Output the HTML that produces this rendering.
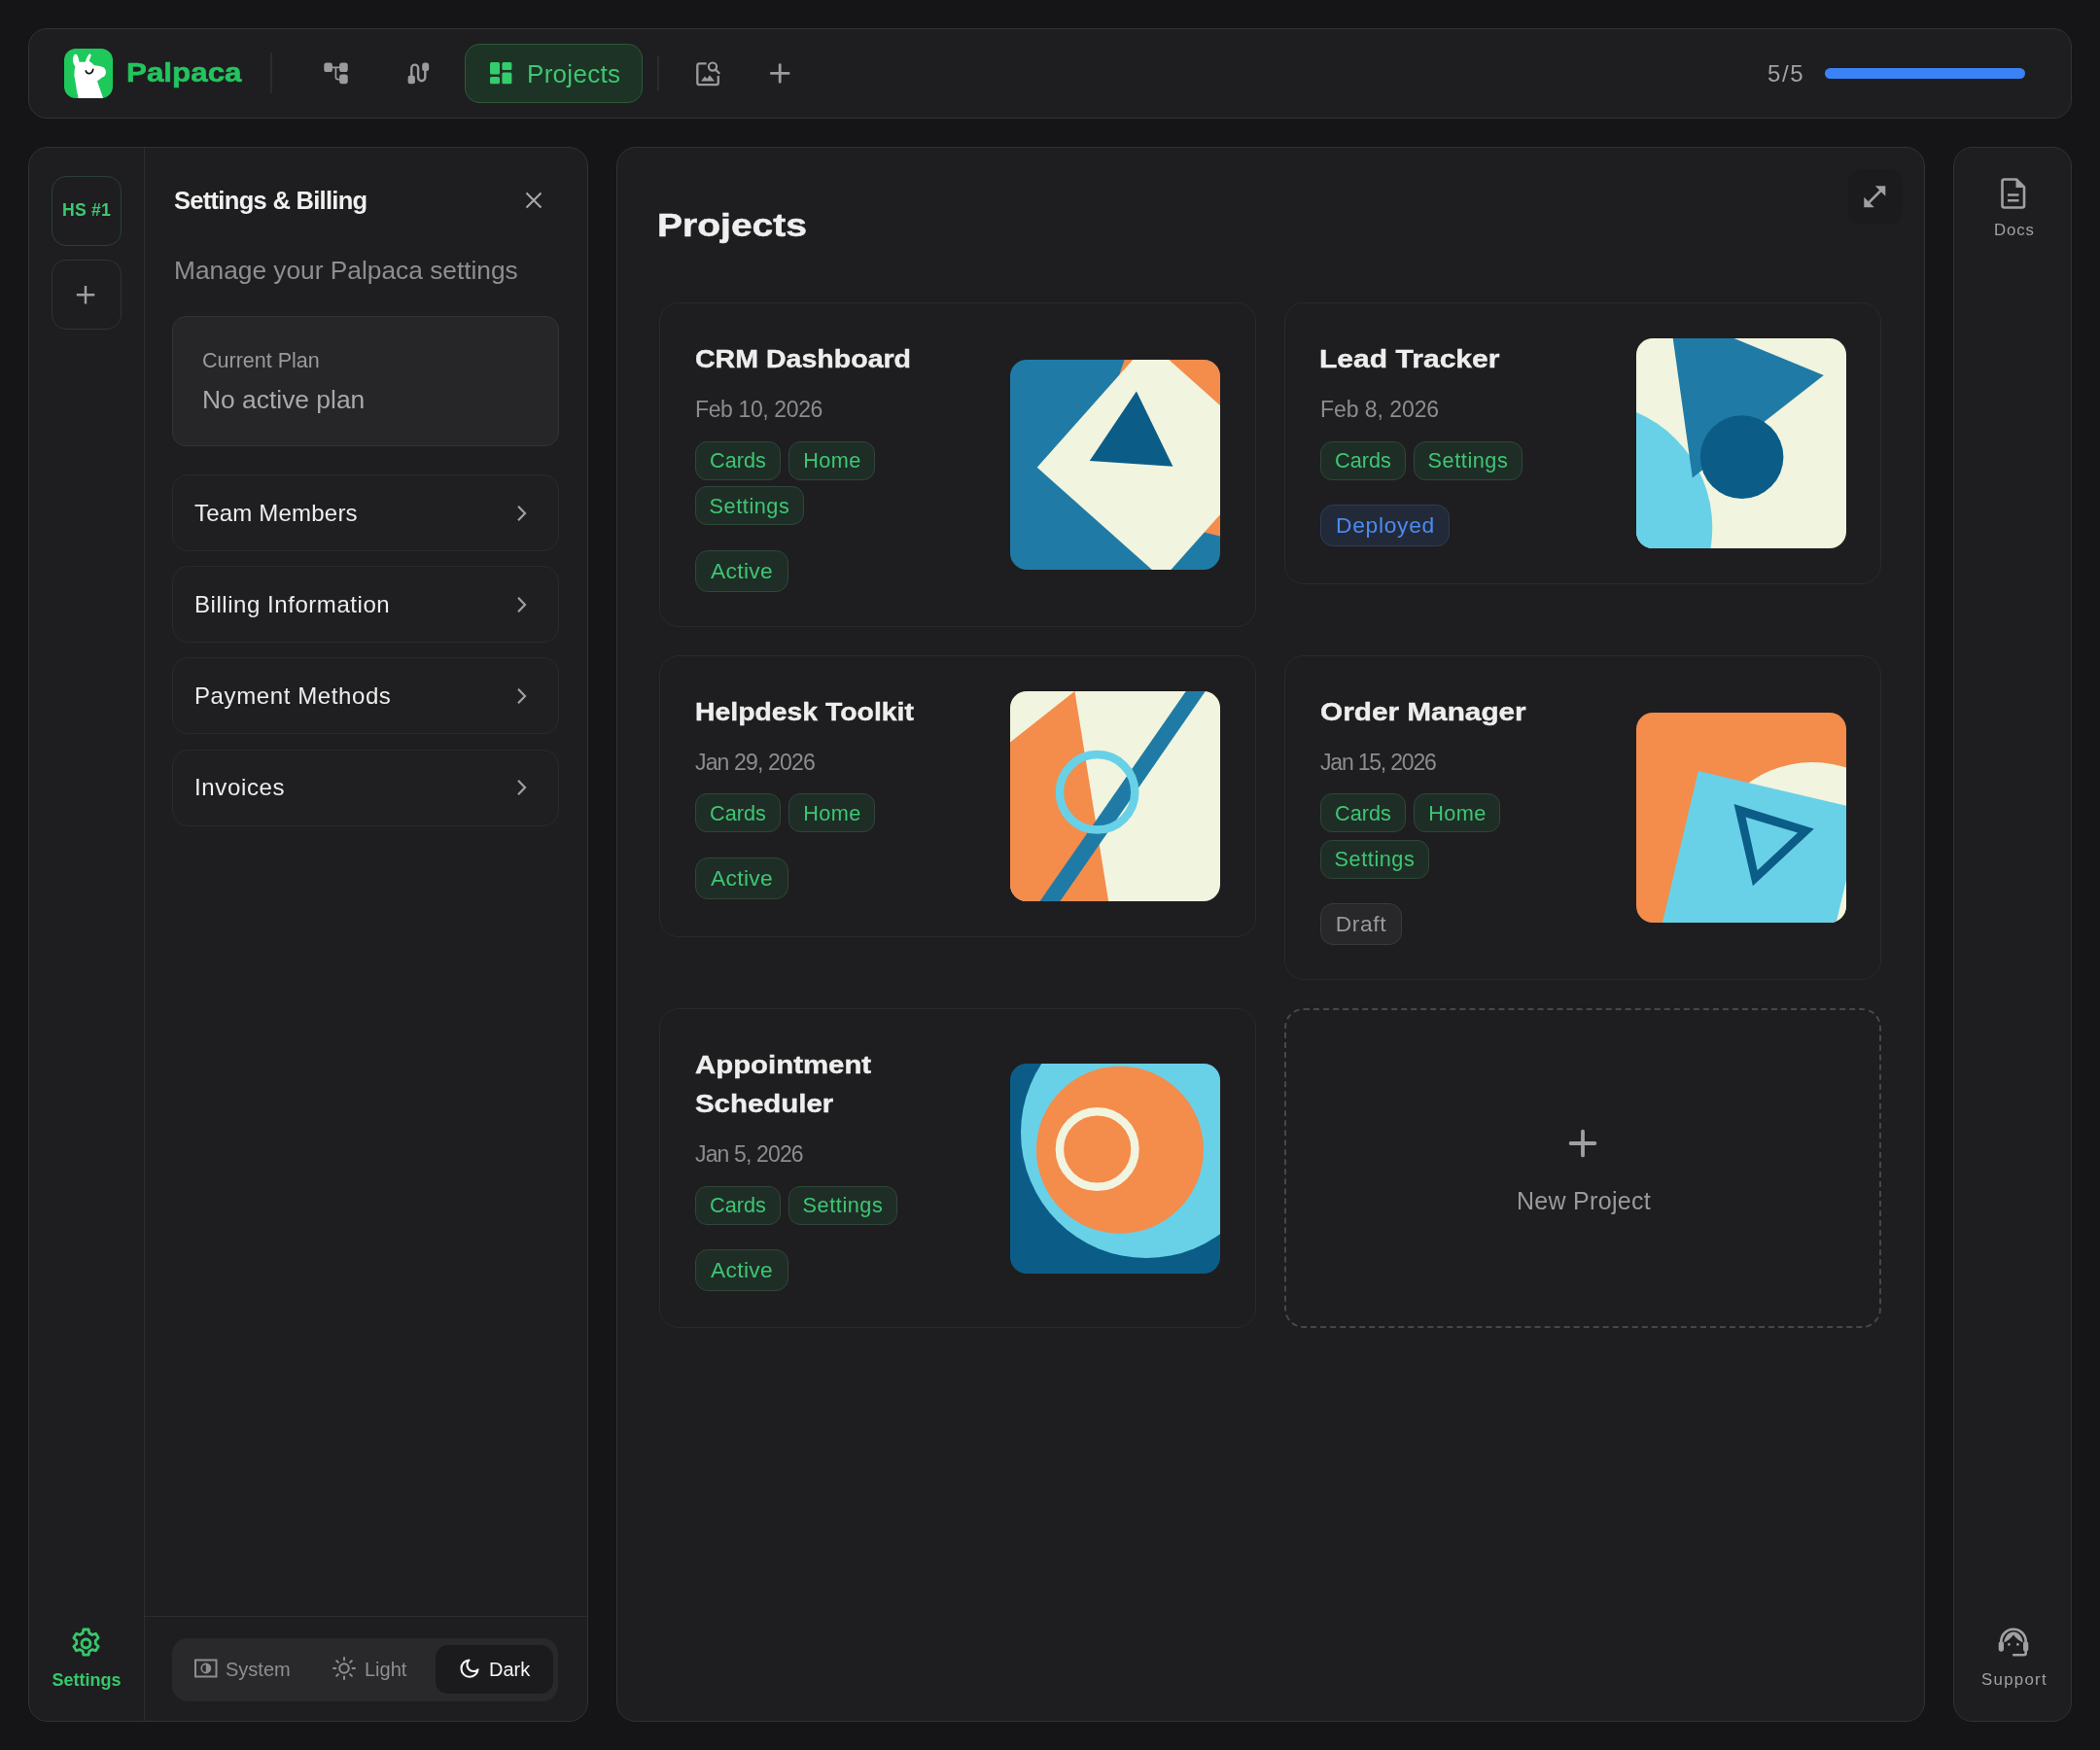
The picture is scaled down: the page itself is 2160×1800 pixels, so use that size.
<!DOCTYPE html>
<html><head><meta charset="utf-8"><title>Palpaca</title>
<style>
html,body{margin:0;padding:0;width:2160px;height:1800px;overflow:hidden;background:#151517;font-family:"Liberation Sans",sans-serif;}
.t{position:absolute;white-space:nowrap;will-change:transform;}
.b{position:absolute;box-sizing:border-box;}
svg{position:absolute;overflow:visible;}
@media (max-width:1200px){html{zoom:0.5;}}
</style></head><body>
<div class="b" style="left:29px;top:29px;width:2102px;height:93px;background:#1e1e20;border:1.5px solid #323235;border-radius:19px;"></div>
<svg style="left:66px;top:50px" width="50" height="51" viewBox="0 0 50 51">
<rect x="0" y="0" width="50" height="51" rx="12" fill="#1ec95b"/>
<path d="M14.6,51 L12.9,43 L12.2,38 L11.3,33 L10.4,28 L10.6,22.5 L11.4,18.6 C9.5,16 8.4,12.5 9.1,9.2 C9.7,6.6 11,5.5 12.2,5.8 C13.6,6.3 14.8,9 15.5,13.8 L21.9,13.7 C22.6,10.5 24,7 26,5.6 C27.2,5 28,6 27.5,7.8 L25.7,12.8 L29.2,15.6 L31,17.2 C35,17.6 38,18 39.9,19 C42.1,20.2 43.2,22.6 42.9,25 C42.6,27.4 41.4,28.8 39.2,29.6 L34,33.6 L40.1,51 Z" fill="#fff"/>
<path d="M22.3,22.9 C23.2,26.6 28.6,27 29.7,21.4" stroke="#151515" stroke-width="1.8" fill="none" stroke-linecap="round"/>
</svg>
<div class="t" style="left:129.8px;top:61.1px;font-size:28px;line-height:28px;color:#22c55e;font-weight:bold;transform:scaleX(1.12);transform-origin:0 0;-webkit-text-stroke:0.6px #22c55e;">Palpaca</div>
<div class="b" style="left:278px;top:54px;width:2px;height:42px;background:#2c2c2f;"></div>
<svg style="left:326px;top:56px" width="40" height="40" viewBox="0 0 40 40" fill="#9b9b9e">
<rect x="7.3" y="8.5" width="8.6" height="9.6" rx="2.6"/>
<rect x="23.1" y="8.5" width="8.6" height="9.6" rx="2.6"/>
<rect x="23.1" y="20.6" width="8.6" height="9.6" rx="2.6"/>
<path d="M15 13.3 H24 M19.4 13.3 V23.5 Q19.4 25.6 22 25.6 H24" stroke="#9b9b9e" stroke-width="1.7" fill="none"/>
</svg>
<svg style="left:410px;top:56px" width="40" height="40" viewBox="0 0 40 40" fill="#9b9b9e">
<path d="M13.3 22 V14 A3.4 3.4 0 0 1 20.1 14 V23.6 A3.6 3.6 0 0 0 27.3 23.6 V16" stroke="#9b9b9e" stroke-width="2.4" fill="none"/>
<path d="M9.6 24 Q9.6 21.8 11.5 21.8 H15.2 Q16.9 21.8 16.9 24 V28 Q16.9 30.2 14.8 30.2 H11.8 Q9.6 30.2 9.6 28 Z"/>
<path d="M24.2 11 Q24.2 8.5 26.5 8.5 H29 Q31.2 8.5 31.2 11 V15 Q31.2 17.1 29 17.1 H26.5 Q24.2 17.1 24.2 15 Z"/>
</svg>
<div class="b" style="left:478px;top:45px;width:183px;height:61px;background:#1d3326;border:1.5px solid #2a5a3a;border-radius:15px;"></div>
<svg style="left:504px;top:64px" width="23" height="23" viewBox="0 0 23 23" fill="#35cc6c">
<rect x="0" y="0" width="10" height="12.4" rx="1.5"/>
<rect x="0" y="15.1" width="10" height="7.2" rx="1.5"/>
<rect x="12.4" y="0" width="10" height="7.9" rx="1.5"/>
<rect x="12.4" y="10.4" width="10" height="11.9" rx="1.5"/>
</svg>
<div class="t" style="left:541.5px;top:62.8px;font-size:26px;line-height:26px;color:#3cc870;font-weight:normal;letter-spacing:0.3px;">Projects</div>
<div class="b" style="left:676px;top:57px;width:2px;height:36px;background:#2c2c2f;"></div>
<svg style="left:714px;top:61px" width="28" height="28" viewBox="0 0 28 28">
<path d="M12.6 4.3 H5.5 Q3.3 4.3 3.3 6.5 V24 Q3.3 26.2 5.5 26.2 H22.6 Q24.8 26.2 24.8 24 V17" stroke="#9b9b9e" stroke-width="2.3" fill="none"/>
<path d="M7 22.6 L11 17.6 L13.2 20 L16 16.3 L21 22.6 Z" fill="#9b9b9e"/>
<circle cx="19" cy="7.6" r="4.1" stroke="#9b9b9e" stroke-width="2.2" fill="none"/>
<path d="M22 10.6 L25.6 14.2" stroke="#9b9b9e" stroke-width="2.3" stroke-linecap="round"/>
</svg>
<svg style="left:790px;top:63px" width="25" height="25" viewBox="0 0 25 25">
<path d="M12.2 3.6 V21.3 M3.3 12.45 H21.1" stroke="#9b9b9e" stroke-width="2.8" stroke-linecap="round"/>
</svg>
<div class="t" style="left:1817.5px;top:63.7px;font-size:24px;line-height:24px;color:#a0a0a3;font-weight:normal;letter-spacing:1.6px;">5/5</div>
<div class="b" style="left:1877px;top:70px;width:206px;height:11px;background:#3b82f6;border-radius:6px;"></div>
<div class="b" style="left:29px;top:151px;width:576px;height:1620px;background:#1e1e20;border:1.5px solid #323235;border-radius:20px;"></div>
<div class="b" style="left:147.6px;top:152px;width:1.200000000000017px;height:1618px;background:#2e2e31;"></div>
<div class="b" style="left:148.8px;top:1661.6px;width:455.2px;height:1.2000000000000455px;background:#2e2e31;"></div>
<div class="b" style="left:53px;top:181px;width:72px;height:72px;border:1.5px solid #2b4035;border-radius:15px;"></div>
<div class="t" style="left:-211.5px;width:600px;text-align:center;top:208.4px;font-size:17.6px;line-height:17.6px;color:#3cc870;font-weight:bold;letter-spacing:0.2px;">HS #1</div>
<div class="b" style="left:53px;top:267px;width:72px;height:72px;border:1.5px solid #323235;border-radius:15px;"></div>
<svg style="left:76px;top:291px" width="24" height="24" viewBox="0 0 24 24">
<path d="M12 3 V21.5 M2.8 12.2 H21.3" stroke="#a0a0a3" stroke-width="2.4"/>
</svg>
<svg style="left:70.1px;top:1671.5px" width="37" height="37" viewBox="0 0 24 24">
<path d="M10.3 2.6 h3.4 l.5 2.5 a7.4 7.4 0 0 1 1.9 1.1 l2.4-.8 1.7 2.9 -1.9 1.7 a7.4 7.4 0 0 1 0 2.2 l1.9 1.7 -1.7 2.9 -2.4-.8 a7.4 7.4 0 0 1 -1.9 1.1 l-.5 2.5 h-3.4 l-.5-2.5 a7.4 7.4 0 0 1 -1.9-1.1 l-2.4.8 -1.7-2.9 1.9-1.7 a7.4 7.4 0 0 1 0-2.2 l-1.9-1.7 1.7-2.9 2.4.8 a7.4 7.4 0 0 1 1.9-1.1 z" stroke="#36c86c" stroke-width="1.8" fill="none" stroke-linejoin="round"/>
<circle cx="12" cy="12" r="2.9" stroke="#36c86c" stroke-width="1.9" fill="none"/>
</svg>
<div class="t" style="left:-211.4px;width:600px;text-align:center;top:1718.8px;font-size:18px;line-height:18px;color:#36c86c;font-weight:bold;">Settings</div>
<div class="t" style="left:178.5px;top:194.2px;font-size:25.5px;line-height:25.5px;color:#f0f0f0;font-weight:bold;letter-spacing:-0.7px;">Settings &amp; Billing</div>
<svg style="left:537px;top:194px" width="24" height="24" viewBox="0 0 24 24">
<path d="M4.5 4.5 L19.5 19.5 M19.5 4.5 L4.5 19.5" stroke="#a8a8ab" stroke-width="2.1"/>
</svg>
<div class="t" style="left:178.5px;top:265.3px;font-size:26.3px;line-height:26.3px;color:#8e8e92;font-weight:normal;">Manage your Palpaca settings</div>
<div class="b" style="left:177px;top:325px;width:398px;height:134px;background:#262628;border:1.5px solid #333336;border-radius:14px;"></div>
<div class="t" style="left:207.7px;top:361.3px;font-size:21.5px;line-height:21.5px;color:#9a9a9d;font-weight:normal;">Current Plan</div>
<div class="t" style="left:207.7px;top:398.3px;font-size:26.4px;line-height:26.4px;color:#a9a9ac;font-weight:normal;">No active plan</div>
<div class="b" style="left:177px;top:488px;width:398px;height:79px;border:1.5px solid #2a2a2d;border-radius:16px;background:#1f1f21;"></div>
<div class="t" style="left:200.3px;top:516.0px;font-size:24px;line-height:24px;color:#ededed;font-weight:normal;letter-spacing:0.2px;">Team Members</div>
<svg style="left:527px;top:515.8px" width="20" height="24" viewBox="0 0 20 24">
<path d="M6 4.8 L13 12 L6 19.2" stroke="#a0a0a3" stroke-width="2.2" fill="none"/>
</svg>
<div class="b" style="left:177px;top:582px;width:398px;height:79px;border:1.5px solid #2a2a2d;border-radius:16px;background:#1f1f21;"></div>
<div class="t" style="left:200.3px;top:610.2px;font-size:24px;line-height:24px;color:#ededed;font-weight:normal;letter-spacing:0.55px;">Billing Information</div>
<svg style="left:527px;top:610.0px" width="20" height="24" viewBox="0 0 20 24">
<path d="M6 4.8 L13 12 L6 19.2" stroke="#a0a0a3" stroke-width="2.2" fill="none"/>
</svg>
<div class="b" style="left:177px;top:676px;width:398px;height:79px;border:1.5px solid #2a2a2d;border-radius:16px;background:#1f1f21;"></div>
<div class="t" style="left:200.3px;top:704.1px;font-size:24px;line-height:24px;color:#ededed;font-weight:normal;letter-spacing:0.6px;">Payment Methods</div>
<svg style="left:527px;top:703.9px" width="20" height="24" viewBox="0 0 20 24">
<path d="M6 4.8 L13 12 L6 19.2" stroke="#a0a0a3" stroke-width="2.2" fill="none"/>
</svg>
<div class="b" style="left:177px;top:771px;width:398px;height:79px;border:1.5px solid #2a2a2d;border-radius:16px;background:#1f1f21;"></div>
<div class="t" style="left:200.3px;top:798.3px;font-size:24px;line-height:24px;color:#ededed;font-weight:normal;letter-spacing:0.65px;">Invoices</div>
<svg style="left:527px;top:798.1px" width="20" height="24" viewBox="0 0 20 24">
<path d="M6 4.8 L13 12 L6 19.2" stroke="#a0a0a3" stroke-width="2.2" fill="none"/>
</svg>
<div class="b" style="left:177px;top:1685px;width:397px;height:65px;background:#29292b;border-radius:16px;"></div>
<div class="b" style="left:448px;top:1692px;width:121px;height:50px;background:#1b1b1d;border-radius:13px;"></div>
<svg style="left:198px;top:1704px" width="28" height="24" viewBox="0 0 28 24">
<rect x="3" y="3.5" width="21.5" height="17" stroke="#8e8e92" stroke-width="2" fill="none"/>
<path d="M13.8 7 A5 5 0 0 1 13.8 17 Z" fill="#8e8e92"/>
<circle cx="13.8" cy="12" r="4.6" stroke="#8e8e92" stroke-width="1.6" fill="none"/>
</svg>
<div class="t" style="left:231.8px;top:1706.9px;font-size:20px;line-height:20px;color:#8e8e92;font-weight:normal;">System</div>
<svg style="left:340px;top:1702px" width="28" height="28" viewBox="0 0 28 28">
<circle cx="14" cy="14" r="4.8" stroke="#8e8e92" stroke-width="2" fill="none"/>
<g stroke="#8e8e92" stroke-width="2" stroke-linecap="round">
<path d="M14 3 V5.4 M14 22.6 V25 M3 14 H5.4 M22.6 14 H25 M6.2 6.2 L7.9 7.9 M20.1 20.1 L21.8 21.8 M6.2 21.8 L7.9 20.1 M20.1 7.9 L21.8 6.2"/>
</g>
</svg>
<div class="t" style="left:374.7px;top:1706.9px;font-size:20px;line-height:20px;color:#8e8e92;font-weight:normal;">Light</div>
<svg style="left:471px;top:1704px" width="24" height="24" viewBox="0 0 24 24">
<path d="M11.5 3.6 A8.6 8.6 0 1 0 20.6 13.2 A6.6 6.6 0 0 1 11.5 3.6 Z" stroke="#f4f4f4" stroke-width="2.1" fill="none" stroke-linejoin="round"/>
</svg>
<div class="t" style="left:503.4px;top:1706.9px;font-size:20px;line-height:20px;color:#f4f4f4;font-weight:normal;">Dark</div>
<div class="b" style="left:634px;top:151px;width:1346px;height:1620px;background:#1e1e20;border:1.5px solid #323235;border-radius:20px;"></div>
<div class="b" style="left:1901px;top:174px;width:56px;height:57px;background:#1b1b1d;border-radius:14px;"></div>
<svg style="left:1912px;top:186px" width="34" height="34" viewBox="0 0 34 34">
<path d="M9.5 23.1 L23.1 9.5" stroke="#a0a0a3" stroke-width="2.6"/>
<path d="M16.8 5.3 H27.3 V15.8 Z M5.3 16.8 V27.3 H15.8 Z" fill="#a0a0a3"/>
</svg>
<div class="t" style="left:676.3px;top:213.7px;font-size:34px;line-height:34px;color:#efefef;font-weight:bold;transform:scaleX(1.148);transform-origin:0 0;-webkit-text-stroke:0.5px #efefef;">Projects</div>
<div class="b" style="left:678px;top:311px;width:614px;height:334px;border:1.5px solid #2a2a2d;border-radius:20px;background:#1e1e20;"></div>
<div class="t" style="left:714.5px;top:355.5px;font-size:26px;line-height:26px;color:#eeeeee;font-weight:bold;transform:scaleX(1.098);transform-origin:0 0;-webkit-text-stroke:0.4px #eeeeee;">CRM Dashboard</div>
<div class="t" style="left:714.5px;top:410.3px;font-size:23px;line-height:23px;color:#8c8c90;font-weight:normal;letter-spacing:-0.38px;">Feb 10, 2026</div>
<div class="b" style="left:715px;top:454px;width:88px;height:40px;background:#1e2e26;border:1.5px solid #31463a;border-radius:12px;"></div>
<div class="t" style="left:459.0px;width:600px;text-align:center;top:463.1px;font-size:21.7px;line-height:21.7px;color:#3ec673;font-weight:normal;">Cards</div>
<div class="b" style="left:811px;top:454px;width:89px;height:40px;background:#1e2e26;border:1.5px solid #31463a;border-radius:12px;"></div>
<div class="t" style="left:555.7px;width:600px;text-align:center;top:463.1px;font-size:21.7px;line-height:21.7px;color:#3ec673;font-weight:normal;letter-spacing:0.4px;">Home</div>
<div class="b" style="left:715px;top:500px;width:112px;height:40px;background:#1e2e26;border:1.5px solid #31463a;border-radius:12px;"></div>
<div class="t" style="left:471.3px;width:600px;text-align:center;top:510.1px;font-size:21.7px;line-height:21.7px;color:#3ec673;font-weight:normal;letter-spacing:0.55px;">Settings</div>
<div class="b" style="left:715px;top:566px;width:96px;height:43px;background:#1e2e26;border:1.5px solid #31463a;border-radius:13px;"></div>
<div class="t" style="left:463.3px;width:600px;text-align:center;top:575.7px;font-size:22.8px;line-height:22.8px;color:#3ec673;font-weight:normal;letter-spacing:0.3px;">Active</div>
<svg style="left:1039px;top:370.0px" width="216" height="216" viewBox="0 0 216 216"><defs><clipPath id="c1"><rect width="216" height="216" rx="17"/></clipPath></defs><g clip-path="url(#c1)"><rect width="216" height="216" fill="#1f7ba6"/>
<circle cx="240.6" cy="50.8" r="133" fill="#f48c4b"/>
<polygon points="27.7,110.7 142.6,-18.4 271.8,96.5 156.8,225.7" fill="#f1f4de"/>
<polygon points="129.9,32.5 81.8,104 167.4,109.8" fill="#0b5d88"/></g></svg>
<div class="b" style="left:1321px;top:311px;width:614px;height:290px;border:1.5px solid #2a2a2d;border-radius:20px;background:#1e1e20;"></div>
<div class="t" style="left:1357.3px;top:355.5px;font-size:26px;line-height:26px;color:#eeeeee;font-weight:bold;transform:scaleX(1.1562);transform-origin:0 0;-webkit-text-stroke:0.4px #eeeeee;">Lead Tracker</div>
<div class="t" style="left:1357.5px;top:410.3px;font-size:23px;line-height:23px;color:#8c8c90;font-weight:normal;letter-spacing:-0.06px;">Feb 8, 2026</div>
<div class="b" style="left:1358px;top:454px;width:88px;height:40px;background:#1e2e26;border:1.5px solid #31463a;border-radius:12px;"></div>
<div class="t" style="left:1102.0px;width:600px;text-align:center;top:463.1px;font-size:21.7px;line-height:21.7px;color:#3ec673;font-weight:normal;">Cards</div>
<div class="b" style="left:1454px;top:454px;width:112px;height:40px;background:#1e2e26;border:1.5px solid #31463a;border-radius:12px;"></div>
<div class="t" style="left:1210.3px;width:600px;text-align:center;top:463.1px;font-size:21.7px;line-height:21.7px;color:#3ec673;font-weight:normal;letter-spacing:0.55px;">Settings</div>
<div class="b" style="left:1358px;top:519px;width:133px;height:43px;background:#222a39;border:1.5px solid #2f3c56;border-radius:13px;"></div>
<div class="t" style="left:1125.0px;width:600px;text-align:center;top:528.7px;font-size:22.8px;line-height:22.8px;color:#4b8bf0;font-weight:normal;letter-spacing:0.7px;">Deployed</div>
<svg style="left:1683px;top:348.0px" width="216" height="216" viewBox="0 0 216 216"><defs><clipPath id="c2"><rect width="216" height="216" rx="17"/></clipPath></defs><g clip-path="url(#c2)"><rect width="216" height="216" fill="#f1f4de"/>
<circle cx="-50.7" cy="194.6" r="129" fill="#68d1e7"/>
<polygon points="33.9,-27.4 192.8,37.9 57.8,143.5" fill="#1f7ba6"/>
<circle cx="108.6" cy="122.1" r="42.8" fill="#0b5d88"/></g></svg>
<div class="b" style="left:678px;top:674px;width:614px;height:290px;border:1.5px solid #2a2a2d;border-radius:20px;background:#1e1e20;"></div>
<div class="t" style="left:714.6px;top:718.5px;font-size:26px;line-height:26px;color:#eeeeee;font-weight:bold;transform:scaleX(1.0911);transform-origin:0 0;-webkit-text-stroke:0.4px #eeeeee;">Helpdesk Toolkit</div>
<div class="t" style="left:714.5px;top:773.3px;font-size:23px;line-height:23px;color:#8c8c90;font-weight:normal;letter-spacing:-0.84px;">Jan 29, 2026</div>
<div class="b" style="left:715px;top:816px;width:88px;height:40px;background:#1e2e26;border:1.5px solid #31463a;border-radius:12px;"></div>
<div class="t" style="left:459.0px;width:600px;text-align:center;top:826.1px;font-size:21.7px;line-height:21.7px;color:#3ec673;font-weight:normal;">Cards</div>
<div class="b" style="left:811px;top:816px;width:89px;height:40px;background:#1e2e26;border:1.5px solid #31463a;border-radius:12px;"></div>
<div class="t" style="left:555.7px;width:600px;text-align:center;top:826.1px;font-size:21.7px;line-height:21.7px;color:#3ec673;font-weight:normal;letter-spacing:0.4px;">Home</div>
<div class="b" style="left:715px;top:882px;width:96px;height:43px;background:#1e2e26;border:1.5px solid #31463a;border-radius:13px;"></div>
<div class="t" style="left:463.3px;width:600px;text-align:center;top:891.7px;font-size:22.8px;line-height:22.8px;color:#3ec673;font-weight:normal;letter-spacing:0.3px;">Active</div>
<svg style="left:1039px;top:711.0px" width="216" height="216" viewBox="0 0 216 216"><defs><clipPath id="c3"><rect width="216" height="216" rx="17"/></clipPath></defs><g clip-path="url(#c3)"><rect width="216" height="216" fill="#f1f4de"/>
<polygon points="0,52.6 66.4,0 101.2,216.4 0,216.4" fill="#f48c4b"/>
<polygon points="180.8,0 200.8,0 51.1,216.4 30.3,216.4" fill="#1f7ba6"/>
<circle cx="89.6" cy="103.8" r="38.7" stroke="#68d1e7" stroke-width="8.5" fill="none"/></g></svg>
<div class="b" style="left:1321px;top:674px;width:614px;height:334px;border:1.5px solid #2a2a2d;border-radius:20px;background:#1e1e20;"></div>
<div class="t" style="left:1357.5px;top:718.5px;font-size:26px;line-height:26px;color:#eeeeee;font-weight:bold;transform:scaleX(1.1447);transform-origin:0 0;-webkit-text-stroke:0.4px #eeeeee;">Order Manager</div>
<div class="t" style="left:1357.5px;top:773.3px;font-size:23px;line-height:23px;color:#8c8c90;font-weight:normal;letter-spacing:-1.2px;">Jan 15, 2026</div>
<div class="b" style="left:1358px;top:816px;width:88px;height:40px;background:#1e2e26;border:1.5px solid #31463a;border-radius:12px;"></div>
<div class="t" style="left:1102.0px;width:600px;text-align:center;top:826.1px;font-size:21.7px;line-height:21.7px;color:#3ec673;font-weight:normal;">Cards</div>
<div class="b" style="left:1454px;top:816px;width:89px;height:40px;background:#1e2e26;border:1.5px solid #31463a;border-radius:12px;"></div>
<div class="t" style="left:1198.7px;width:600px;text-align:center;top:826.1px;font-size:21.7px;line-height:21.7px;color:#3ec673;font-weight:normal;letter-spacing:0.4px;">Home</div>
<div class="b" style="left:1358px;top:864px;width:112px;height:40px;background:#1e2e26;border:1.5px solid #31463a;border-radius:12px;"></div>
<div class="t" style="left:1114.3px;width:600px;text-align:center;top:873.1px;font-size:21.7px;line-height:21.7px;color:#3ec673;font-weight:normal;letter-spacing:0.55px;">Settings</div>
<div class="b" style="left:1358px;top:929px;width:84px;height:43px;background:#28282a;border:1.5px solid #3a3a3d;border-radius:13px;"></div>
<div class="t" style="left:1100.3px;width:600px;text-align:center;top:938.7px;font-size:22.8px;line-height:22.8px;color:#9a9a9d;font-weight:normal;letter-spacing:0.6px;">Draft</div>
<svg style="left:1683px;top:733.0px" width="216" height="216" viewBox="0 0 216 216"><defs><clipPath id="c4"><rect width="216" height="216" rx="17"/></clipPath></defs><g clip-path="url(#c4)"><rect width="216" height="216" fill="#f48c4b"/>
<circle cx="181" cy="163" r="112" fill="#f1f4de"/>
<polygon points="63.8,59.9 233.1,99.9 193.1,269.2 23.8,229.2" fill="#68d1e7"/>
<path d="M100.5,94 L182.8,119.4 L119.9,178.3 Z M112.6,107.4 L124.6,162.2 L166,123.4 Z" fill="#0b5d88" fill-rule="evenodd"/></g></svg>
<div class="b" style="left:678px;top:1037px;width:614px;height:329px;border:1.5px solid #2a2a2d;border-radius:20px;background:#1e1e20;"></div>
<div class="t" style="left:715.1px;top:1081.5px;font-size:26px;line-height:26px;color:#eeeeee;font-weight:bold;transform:scaleX(1.1301);transform-origin:0 0;-webkit-text-stroke:0.4px #eeeeee;">Appointment</div>
<div class="t" style="left:714.5px;top:1121.5px;font-size:26px;line-height:26px;color:#eeeeee;font-weight:bold;transform:scaleX(1.1311);transform-origin:0 0;-webkit-text-stroke:0.4px #eeeeee;">Scheduler</div>
<div class="t" style="left:714.5px;top:1176.3px;font-size:23px;line-height:23px;color:#8c8c90;font-weight:normal;letter-spacing:-0.86px;">Jan 5, 2026</div>
<div class="b" style="left:715px;top:1220px;width:88px;height:40px;background:#1e2e26;border:1.5px solid #31463a;border-radius:12px;"></div>
<div class="t" style="left:459.0px;width:600px;text-align:center;top:1229.1px;font-size:21.7px;line-height:21.7px;color:#3ec673;font-weight:normal;">Cards</div>
<div class="b" style="left:811px;top:1220px;width:112px;height:40px;background:#1e2e26;border:1.5px solid #31463a;border-radius:12px;"></div>
<div class="t" style="left:567.3px;width:600px;text-align:center;top:1229.1px;font-size:21.7px;line-height:21.7px;color:#3ec673;font-weight:normal;letter-spacing:0.55px;">Settings</div>
<div class="b" style="left:715px;top:1285px;width:96px;height:43px;background:#1e2e26;border:1.5px solid #31463a;border-radius:13px;"></div>
<div class="t" style="left:463.3px;width:600px;text-align:center;top:1294.7px;font-size:22.8px;line-height:22.8px;color:#3ec673;font-weight:normal;letter-spacing:0.3px;">Active</div>
<svg style="left:1039px;top:1093.5px" width="216" height="216" viewBox="0 0 216 216"><defs><clipPath id="c5"><rect width="216" height="216" rx="17"/></clipPath></defs><g clip-path="url(#c5)"><rect width="216" height="216" fill="#0b5d88"/>
<circle cx="140" cy="71" r="129" fill="#68d1e7"/>
<circle cx="112.9" cy="88.7" r="86" fill="#f48c4b"/>
<circle cx="89.7" cy="88" r="38.8" stroke="#f1f4de" stroke-width="8.5" fill="none"/></g></svg>
<div class="b" style="left:1321px;top:1037px;width:614px;height:329px;border:2px dashed #47474b;border-radius:20px;"></div>
<svg style="left:1610px;top:1158px" width="36" height="36" viewBox="0 0 36 36">
<path d="M18 5.6 V30.4 M5.6 18 H30.4" stroke="#a0a0a3" stroke-width="3.8" stroke-linecap="round"/>
</svg>
<div class="t" style="left:1328.5px;width:600px;text-align:center;top:1222.8px;font-size:25px;line-height:25px;color:#9a9a9d;font-weight:normal;letter-spacing:0.3px;">New Project</div>
<div class="b" style="left:2009px;top:151px;width:122px;height:1620px;background:#1e1e20;border:1.5px solid #323235;border-radius:20px;"></div>
<svg style="left:2057px;top:182px" width="28" height="34" viewBox="0 0 28 34">
<path d="M4.5 2.5 H17 L25 10.5 V29.5 Q25 31.5 23 31.5 H4.5 Q2.5 31.5 2.5 29.5 V4.5 Q2.5 2.5 4.5 2.5 Z" stroke="#a0a0a3" stroke-width="2.6" fill="none" stroke-linejoin="round"/>
<path d="M16.5 3 V11 H24.5 Z" fill="#a0a0a3"/>
<path d="M8 18.6 H19.5 M8 24.2 H19.5" stroke="#a0a0a3" stroke-width="2.5"/>
</svg>
<div class="t" style="left:1771.5px;width:600px;text-align:center;top:229.4px;font-size:16.8px;line-height:16.8px;color:#a0a0a3;font-weight:normal;letter-spacing:0.9px;">Docs</div>
<svg style="left:2053px;top:1673px" width="36" height="34" viewBox="0 0 36 34">
<path d="M5.3 17 V15.5 A12.7 12.7 0 0 1 30.7 15.5 V17" stroke="#a0a0a3" stroke-width="2.6" fill="none"/>
<rect x="2.7" y="15.3" width="5.3" height="10.4" rx="2.6" fill="#a0a0a3"/>
<rect x="28" y="15.3" width="5.3" height="10.4" rx="2.6" fill="#a0a0a3"/>
<path d="M8.2,16.6 C9,10 13,5.8 18,5.6 C23,5.8 27,10 27.8,16.4 C24,15 20.5,12 18,8.6 C15.5,12 12,15 8.2,16.6 Z" fill="#a0a0a3"/>
<circle cx="13.4" cy="18.4" r="1.35" fill="#a0a0a3"/><circle cx="22.4" cy="18.4" r="1.35" fill="#a0a0a3"/>
<path d="M30.7 25 V27.6 Q30.7 29.2 29 29.2 H17.2" stroke="#a0a0a3" stroke-width="2.6" fill="none"/>
</svg>
<div class="t" style="left:1771.5px;width:600px;text-align:center;top:1720.4px;font-size:16.8px;line-height:16.8px;color:#a0a0a3;font-weight:normal;letter-spacing:1.3px;">Support</div>
</body></html>
